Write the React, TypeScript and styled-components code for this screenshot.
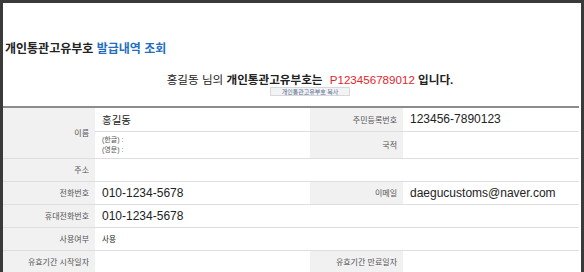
import styled, { createGlobalStyle } from "styled-components";

const GlobalStyle = createGlobalStyle`
  html, body {
    margin: 0;
    padding: 0;
    background: #3a3a3a;
  }
  body {
    font-family: "Liberation Sans", "Noto Sans CJK KR", sans-serif;
  }
`;

const Frame = styled.div`
  padding: 3px 3px 0 3px;
  height: 272px;
  box-sizing: border-box;
  overflow: hidden;
`;

const Panel = styled.div`
  background: #fff;
  height: 100%;
  padding-right: 2px;
`;

const Title = styled.h2`
  margin: 0;
  padding: 38px 0 0 2px;
  font-size: 12px;
  line-height: 16px;
  font-weight: 700;
  color: #222;
  span {
    color: #1f6fc0;
  }
`;

const Summary = styled.div`
  margin-top: 15px;
  padding-left: 38px;
  text-align: center;
`;

const Sentence = styled.p`
  margin: 0;
  font-size: 11.6px;
  line-height: 15px;
  color: #222;
  b {
    font-weight: 700;
  }
`;

const Code = styled.span`
  color: #e3262c;
  margin-left: 4px;
`;

const CopyButton = styled.button`
  display: block;
  margin: 0 auto;
  width: 80px;
  height: 9px;
  padding: 0;
  border: 1px solid #d8d8d8;
  background: #f2f3f5;
  color: #5b6c8e;
  font-family: "Noto Sans CJK KR", sans-serif;
  font-size: 6px;
  line-height: 7px;
`;

const Table = styled.table`
  margin-top: 10px;
  width: 576px;
  border-collapse: collapse;
  table-layout: fixed;
  border-top: 2px solid #8c8c8c;
`;

const Row = styled.tr<{ $h: number }>`
  height: ${(p) => p.$h}px;
`;

const Label = styled.th`
  background: #f1f1f1;
  border-bottom: 1px solid #dedede;
  text-align: right;
  padding: 0 6px 0 0;
  font-size: 8px;
  font-weight: 400;
  color: #555;
`;

const Value = styled.td<{ $size?: number }>`
  border-bottom: 1px solid #dedede;
  padding: 0 0 0 7px;
  font-size: ${(p) => p.$size ?? 12}px;
  color: #222;
`;

const SubLines = styled.div`
  font-size: 7px;
  line-height: 10px;
  color: #555;
`;

export default function App() {
  return (
    <>
      <GlobalStyle />
      <Frame>
        <Panel>
          <Title>
            개인통관고유부호 <span>발급내역 조회</span>
          </Title>
          <Summary>
            <Sentence>
              홍길동 님의 <b>개인통관고유부호는</b> <Code>P123456789012</Code> <b>입니다.</b>
            </Sentence>
            <CopyButton>개인통관고유부호 복사</CopyButton>
          </Summary>
          <Table>
            <colgroup>
              <col style={{ width: 92 }} />
              <col style={{ width: 215 }} />
              <col style={{ width: 93 }} />
              <col style={{ width: 176 }} />
            </colgroup>
            <tbody>
              <Row $h={24}>
                <Label rowSpan={2}>이름</Label>
                <Value $size={10.5}>홍길동</Value>
                <Label>주민등록번호</Label>
                <Value>123456-7890123</Value>
              </Row>
              <Row $h={27}>
                <Value>
                  <SubLines>
                    (한글) :<br />
                    (영문) :
                  </SubLines>
                </Value>
                <Label>국적</Label>
                <Value />
              </Row>
              <Row $h={23}>
                <Label>주소</Label>
                <Value colSpan={3} />
              </Row>
              <Row $h={23}>
                <Label>전화번호</Label>
                <Value>010-1234-5678</Value>
                <Label>이메일</Label>
                <Value>daegucustoms@naver.com</Value>
              </Row>
              <Row $h={23}>
                <Label>휴대전화번호</Label>
                <Value colSpan={3}>010-1234-5678</Value>
              </Row>
              <Row $h={23}>
                <Label>사용여부</Label>
                <Value colSpan={3} $size={7.5}>
                  사용
                </Value>
              </Row>
              <Row $h={23}>
                <Label>유효기간 시작일자</Label>
                <Value />
                <Label>유효기간 만료일자</Label>
                <Value />
              </Row>
            </tbody>
          </Table>
        </Panel>
      </Frame>
    </>
  );
}
